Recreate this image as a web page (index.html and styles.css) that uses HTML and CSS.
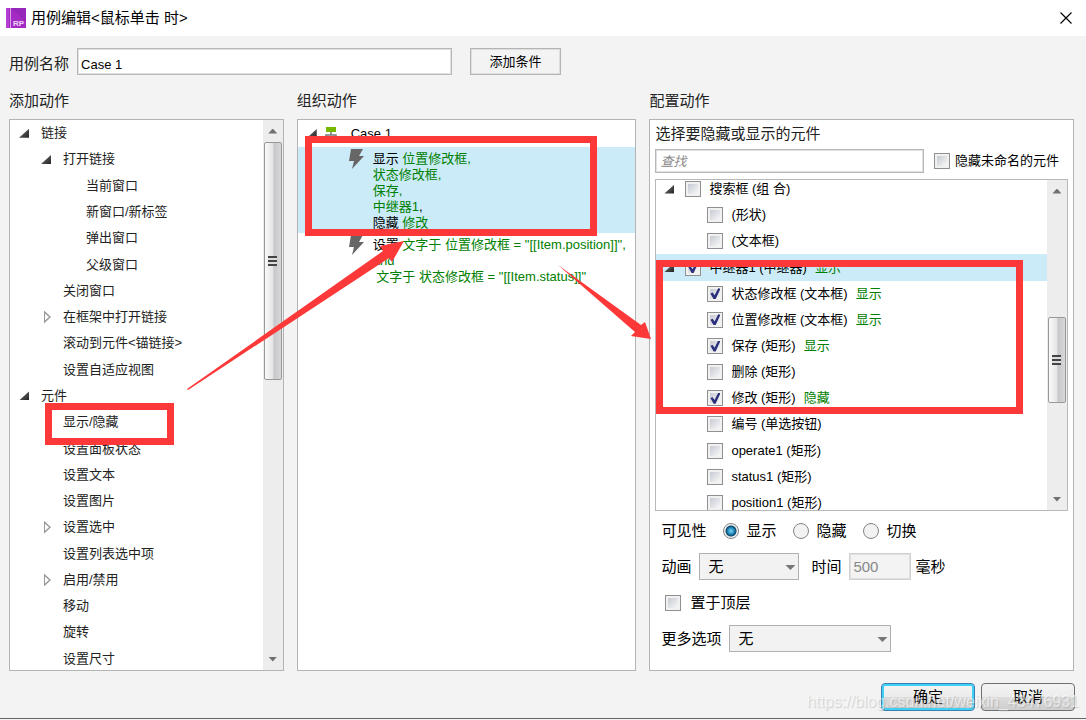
FILE: index.html
```html
<!DOCTYPE html>
<html lang="zh-CN">
<head>
<meta charset="utf-8">
<title>用例编辑</title>
<link rel="stylesheet" href="styles.css">
</head>
<body>
<div class="dialog">
  <header class="titlebar">
    <svg class="logo" width="20" height="20" viewBox="0 0 20 20" aria-hidden="true">
      <rect width="20" height="20" fill="#a32bc4"/>
      <path d="M5 0H20V14Z" fill="#9527ba"/>
      <rect width="3" height="20" fill="#b23fd0"/>
      <rect x="4" width="1" height="20" fill="#d9a0e8"/>
      <text class="logo-text" x="7" y="18">RP</text>
    </svg>
    <h1 class="title">用例编辑&lt;鼠标单击 时&gt;</h1>
    <button class="close" type="button" aria-label="关闭">
      <svg width="12" height="12" viewBox="0 0 12 12"><path d="M.5 .5L11.5 11.5M11.5 .5L.5 11.5" stroke="#000" stroke-width="1.2"/></svg>
    </button>
  </header>

  <div class="name-row">
    <label class="name-label" for="case-name">用例名称</label>
    <input class="field case-name" id="case-name" type="text" value="Case 1">
    <button class="flat-button" type="button">添加条件</button>
  </div>

  <main class="columns">
    <section class="column">
      <h2 class="heading">添加动作</h2>
      <div class="panel with-scroll">
        <ul class="tree">
          <li class="node l0 open">链接</li>
          <li class="node l1 open">打开链接</li>
          <li class="node l2">当前窗口</li>
          <li class="node l2">新窗口/新标签</li>
          <li class="node l2">弹出窗口</li>
          <li class="node l2">父级窗口</li>
          <li class="node l1">关闭窗口</li>
          <li class="node l1 closed">在框架中打开链接</li>
          <li class="node l1">滚动到元件&lt;锚链接&gt;</li>
          <li class="node l1">设置自适应视图</li>
          <li class="node l0 open">元件</li>
          <li class="node l1">显示/隐藏</li>
          <li class="node l1">设置面板状态</li>
          <li class="node l1">设置文本</li>
          <li class="node l1">设置图片</li>
          <li class="node l1 closed">设置选中</li>
          <li class="node l1">设置列表选中项</li>
          <li class="node l1 closed">启用/禁用</li>
          <li class="node l1">移动</li>
          <li class="node l1">旋转</li>
          <li class="node l1">设置尺寸</li>
        </ul>
        <div class="scrollbar actions-scroll">
          <span class="scroll-arrow up"></span>
          <span class="thumb"></span>
          <span class="rest"></span>
          <span class="scroll-arrow down"></span>
        </div>
      </div>
    </section>

    <section class="column">
      <h2 class="heading">组织动作</h2>
      <div class="panel">
        <div class="case-line open">
          <svg width="14" height="14" viewBox="0 0 14 14" aria-hidden="true">
            <rect x="2" width="10" height="5" fill="#76b900"/>
            <path d="M7 5V8M2 12V8H12V12" fill="none" stroke="#777" stroke-width="1.5"/>
            <path d="M0 10H4V14H0ZM10 10H14V14H10Z" fill="#777"/>
          </svg>
          <span>Case 1</span>
        </div>
        <div class="action selected">
          <svg class="bolt" width="15" height="20" viewBox="0 0 15 20" aria-hidden="true"><path d="M2 0H14L10 7H15L3 20L5 12H0Z" fill="#666"/></svg>
          <p>显示 <em>位置修改框,<br>状态修改框,<br>保存,<br>中继器1</em>,<br>隐藏 <em>修改</em></p>
        </div>
        <div class="action">
          <svg class="bolt" width="15" height="20" viewBox="0 0 15 20" aria-hidden="true"><path d="M2 0H14L10 7H15L3 20L5 12H0Z" fill="#666"/></svg>
          <p>设置 <em>文字于 位置修改框 = "[[Item.position]]",<br>and<br>&nbsp;文字于 状态修改框 = "[[Item.status]]"</em></p>
        </div>
      </div>
    </section>

    <section class="column">
      <h2 class="heading">配置动作</h2>
      <div class="panel config">
        <h3 class="subheading">选择要隐藏或显示的元件</h3>
        <div class="search-row">
          <input class="field search" type="text" placeholder="查找" aria-label="查找">
          <label class="option small"><input class="check" type="checkbox">隐藏未命名的元件</label>
        </div>
        <div class="widget-list with-scroll">
          <div class="widgets">
            <div class="widget parent open"><label><input class="check" type="checkbox">搜索框 (组 合)</label></div>
            <div class="widget"><label><input class="check" type="checkbox">(形状)</label></div>
            <div class="widget"><label><input class="check" type="checkbox">(文本框)</label></div>
            <div class="widget parent open selected"><label><input class="check" type="checkbox" checked>中继器1 (中继器)</label><em>显示</em></div>
            <div class="widget"><label><input class="check" type="checkbox" checked>状态修改框 (文本框)</label><em>显示</em></div>
            <div class="widget"><label><input class="check" type="checkbox" checked>位置修改框 (文本框)</label><em>显示</em></div>
            <div class="widget"><label><input class="check" type="checkbox" checked>保存 (矩形)</label><em>显示</em></div>
            <div class="widget"><label><input class="check" type="checkbox">删除 (矩形)</label></div>
            <div class="widget"><label><input class="check" type="checkbox" checked>修改 (矩形)</label><em>隐藏</em></div>
            <div class="widget"><label><input class="check" type="checkbox">编号 (单选按钮)</label></div>
            <div class="widget"><label><input class="check" type="checkbox">operate1 (矩形)</label></div>
            <div class="widget"><label><input class="check" type="checkbox">status1 (矩形)</label></div>
            <div class="widget"><label><input class="check" type="checkbox">position1 (矩形)</label></div>
          </div>
          <div class="scrollbar widgets-scroll">
            <span class="scroll-arrow up"></span>
            <span class="before"></span>
            <span class="thumb"></span>
            <span class="rest"></span>
            <span class="scroll-arrow down"></span>
          </div>
        </div>
        <div class="settings">
          <div class="setting visibility" role="radiogroup" aria-label="可见性">
            <span>可见性</span>
            <label class="option"><input class="radio" type="radio" name="visibility" checked>显示</label>
            <label class="option"><input class="radio" type="radio" name="visibility">隐藏</label>
            <label class="option"><input class="radio" type="radio" name="visibility">切换</label>
          </div>
          <div class="setting animation">
            <label for="anim">动画</label>
            <span class="select-box"><select id="anim"><option>无</option></select></span>
            <label class="time-label" for="time">时间</label>
            <input class="field time" id="time" type="text" value="500" disabled>
            <span class="unit">毫秒</span>
          </div>
          <div class="setting front">
            <label class="option"><input class="check" type="checkbox">置于顶层</label>
          </div>
          <div class="setting">
            <label for="more">更多选项</label>
            <span class="select-box wide"><select id="more"><option>无</option></select></span>
          </div>
        </div>
      </div>
    </section>
  </main>

  <footer class="footer">
    <button class="push primary" type="button">确定</button>
    <button class="push" type="button">取消</button>
  </footer>

  <svg class="marks" width="1086" height="720" viewBox="0 0 1086 720" aria-hidden="true">
    <g fill="none" stroke="#fd3838" stroke-width="7">
      <rect x="48.500" y="406.500" width="122" height="35"/>
      <rect x="308.500" y="139.500" width="285" height="93"/>
      <rect x="659.500" y="263.500" width="360" height="147"/>
    </g>
    <g fill="#fd3838">
      <path d="M187 389L383 251L380 246L404 241L392 262L389 258L188 390Z"/>
      <path d="M558 265L641 325L645 322L651 339L631 336L635 332Z"/>
    </g>
  </svg>
  <span class="watermark">https://blog.csdn.net/weixin_43476931</span>
</div>
</body>
</html>
```

FILE: styles.css
```css
* {
  box-sizing: border-box;
}

body {
  margin: 0;
  background: #f3f3f3;
  color: #000;
  font: 13px/16px "Liberation Sans", "Noto Sans CJK SC", sans-serif;
}

h1, h2, h3, p, ul {
  margin: 0;
  padding: 0;
  font-weight: normal;
}

input, button, select {
  font: inherit;
  color: inherit;
  margin: 0;
}

em {
  color: #008000;
  font-style: normal;
}

.dialog {
  position: relative;
  display: flex;
  flex-direction: column;
  min-height: calc(100vh - 1px);
  border-bottom: 1px solid #666;
}

.titlebar {
  display: flex;
  align-items: center;
  height: 36px;
  padding: 0 14px 0 6px;
  background: #fff;
}

.logo-text {
  fill: #f0d4f7;
  font: bold 8px "Liberation Sans", sans-serif;
}

.title {
  flex: 1;
  margin-left: 5px;
  font-size: 15px;
  line-height: 20px;
}

.close {
  display: flex;
  padding: 0;
  border: 0;
  background: none;
}

.name-row {
  display: flex;
  align-items: center;
  height: 27px;
  margin: 12px 12px 0 9px;
  font-size: 15px;
}

.name-label {
  padding-top: 4px;
  color: #222;
}

.field {
  height: 27px;
  padding: 5px 3px 0;
  border: 1px solid #b8b8b8;
  box-shadow: inset 0 0 0 1px #e0e0e0;
  background: #fff;
  font-size: 13px;
}

.case-name {
  width: 375px;
  margin: 0 18px 0 8px;
}

.flat-button {
  width: 91px;
  height: 27px;
  padding: 0;
  border: 1px solid #b4b4b4;
  box-shadow: inset 0 0 0 1px #dedede;
  background: #f3f3f3;
  font-size: 13px;
}

.columns {
  flex: 1;
  display: grid;
  grid-template-columns: 275fr 340fr 425fr;
  gap: 13px;
  margin: 16px 12px 0 9px;
}

.column {
  display: flex;
  flex-direction: column;
}

.heading {
  height: 28px;
  color: #222;
  font-size: 15px;
  line-height: 20px;
}

.panel {
  flex: 1;
  border: 1px solid #b4b4b4;
  background: #fff;
}

.with-scroll {
  display: flex;
}

.tree {
  flex: 1;
  display: flex;
  flex-direction: column;
  margin-bottom: -2px;
  list-style: none;
}

.node {
  flex: 1;
  display: flex;
  align-items: center;
  color: #222;
}

.l0 { padding-left: 9px; }
.l1 { padding-left: 31px; }
.l2 { padding-left: 54px; }

.node::before,
.widget::before,
.case-line::before {
  content: "";
  flex: none;
  width: 10px;
  height: 9px;
  margin-right: 12px;
}

.open::before {
  background: linear-gradient(135deg, #777, #222);
  clip-path: polygon(100% 0, 100% 100%, 0 100%);
}

.closed::before {
  height: 13px;
  background: #999;
  clip-path: polygon(evenodd, 3px 0, 10px 50%, 3px 100%, 3px 0, 4px 3px, 4px 10px, 8px 50%, 4px 3px);
}

.scrollbar {
  display: flex;
  flex-direction: column;
  width: 20px;
  padding: 0 1px;
  background: #ededed;
}

.scroll-arrow {
  display: flex;
  align-items: center;
  justify-content: center;
  height: 22px;
}

.scroll-arrow::after {
  content: "";
  width: 9px;
  height: 5px;
  background: #707070;
}

.up::after { clip-path: polygon(50% 0, 100% 100%, 0 100%); }
.down::after { clip-path: polygon(0 0, 100% 0, 50% 100%); }

.thumb {
  display: flex;
  align-items: center;
  justify-content: center;
  border: 1px solid #989898;
  border-radius: 2px;
  background: linear-gradient(90deg, #fafafa, #e4e4e6 50%, #c6c7ca 55%, #d8d8da);
}

.thumb::after {
  content: "";
  width: 9px;
  height: 10px;
  background: repeating-linear-gradient(#444 0 2px, #ddd 2px 4px);
}

.actions-scroll .thumb { flex: 237; }
.actions-scroll .rest { flex: 270; }
.widgets-scroll .before { flex: 116; }
.widgets-scroll .thumb { flex: 84; }
.widgets-scroll .rest { flex: 86; }

.case-line {
  display: flex;
  align-items: center;
  height: 27px;
  padding-left: 9px;
}

.case-line::before {
  margin-right: 7px;
}

.case-line span {
  margin-left: 13px;
}

.action {
  display: flex;
  gap: 9px;
  padding: 4px 0 2px 51px;
  white-space: nowrap;
}

.bolt {
  flex: none;
  margin-top: -2px;
}

.selected {
  background: #cbebf8;
}

.config {
  display: flex;
  flex-direction: column;
  padding: 4px 5px 18px;
}

.subheading {
  color: #222;
  font-size: 15px;
  line-height: 20px;
}

.search-row {
  display: flex;
  align-items: center;
  justify-content: space-between;
  margin: 5px 9px 6px 0;
}

.search {
  width: 269px;
  height: 24px;
  padding: 0 4px;
}

.search::placeholder {
  color: #888;
  font-style: italic;
}

.option {
  display: flex;
  align-items: center;
  gap: 7px;
}

.option.small {
  gap: 5px;
}

.check {
  appearance: none;
  flex: none;
  display: flex;
  align-items: center;
  justify-content: center;
  width: 16px;
  height: 16px;
  border: 1px solid #909090;
  background: linear-gradient(135deg, #c6cad2, #f8f8f8) content-box, #f1f1f1;
  padding: 2px;
}

.check:checked::after {
  content: "";
  width: 11px;
  height: 11px;
  background: #2b2f7c;
  clip-path: polygon(0 48%, 22% 40%, 42% 65%, 78% 0, 100% 4%, 52% 100%, 32% 100%);
}

.widget-list {
  flex: 1;
  border: 1px solid #b8b8b8;
  overflow: hidden;
}

.widgets {
  flex: 1;
  display: flex;
  flex-direction: column;
  margin: -4px 0 -6px;
}

.widget {
  flex: 1;
  display: flex;
  align-items: center;
  padding-left: 29px;
}

.widget.parent {
  padding-left: 8px;
}

.widget.parent::before {
  margin-right: 11px;
}

.widget label {
  display: flex;
  align-items: center;
  gap: 8px;
}

.widget em {
  margin-left: 8px;
}

.settings {
  display: grid;
  gap: 9px;
  padding: 6px 5px 0 6px;
  font-size: 15px;
}

.setting {
  display: flex;
  align-items: center;
  gap: 8px;
  height: 27px;
}

.visibility {
  gap: 17px;
}

.front {
  padding-left: 4px;
}

.front .option {
  gap: 9px;
}

.radio {
  appearance: none;
  width: 16px;
  height: 16px;
  border: 1px solid #858585;
  border-radius: 50%;
  background: #f2f2f2;
}

.radio:checked {
  background: radial-gradient(circle at 50% 50%, #7fd6f5 0, #2592c4 3px, #0d4668 5px, #f2f2f2 6px);
}

.select-box {
  position: relative;
  width: 100px;
  height: 27px;
}

.select-box.wide {
  width: 162px;
}

.select-box select {
  appearance: none;
  width: 100%;
  height: 100%;
  padding: 0 8px;
  border: 1px solid #b0b0b0;
  border-radius: 0;
  background: #f2f2f2;
}

.select-box::after {
  content: "";
  position: absolute;
  right: 4px;
  top: 12px;
  width: 10px;
  height: 5px;
  background: #777;
  clip-path: polygon(0 0, 100% 0, 50% 100%);
}

.time-label {
  margin-left: 4px;
}

.time {
  width: 62px;
  padding-top: 0;
  border: 1px solid #d0d0d0;
  background: #f3f3f3;
  color: #888;
  font-size: 15px;
}

.unit {
  margin-left: -4px;
}

.footer {
  display: flex;
  justify-content: flex-end;
  gap: 6px;
  padding: 12px 11px 7px;
}

.push {
  width: 94px;
  height: 28px;
  border: 1px solid #707070;
  border-radius: 4px;
  background: linear-gradient(#f4f4f4, #ebebeb 50%, #dcdcdc 50%, #cecece);
  padding: 0;
  font-size: 15px;
}

.primary {
  border-color: #3c7fb1;
  box-shadow: inset 0 0 0 2px #3fd0f5;
}

.marks {
  position: absolute;
  top: 0;
  left: 0;
  pointer-events: none;
}

.watermark {
  position: absolute;
  right: 7px;
  bottom: 6px;
  color: rgba(255, 255, 255, 0.6);
  font-size: 16px;
  line-height: 20px;
  text-shadow: 1px 1px 1px rgba(120, 120, 120, 0.3);
  pointer-events: none;
}
```
